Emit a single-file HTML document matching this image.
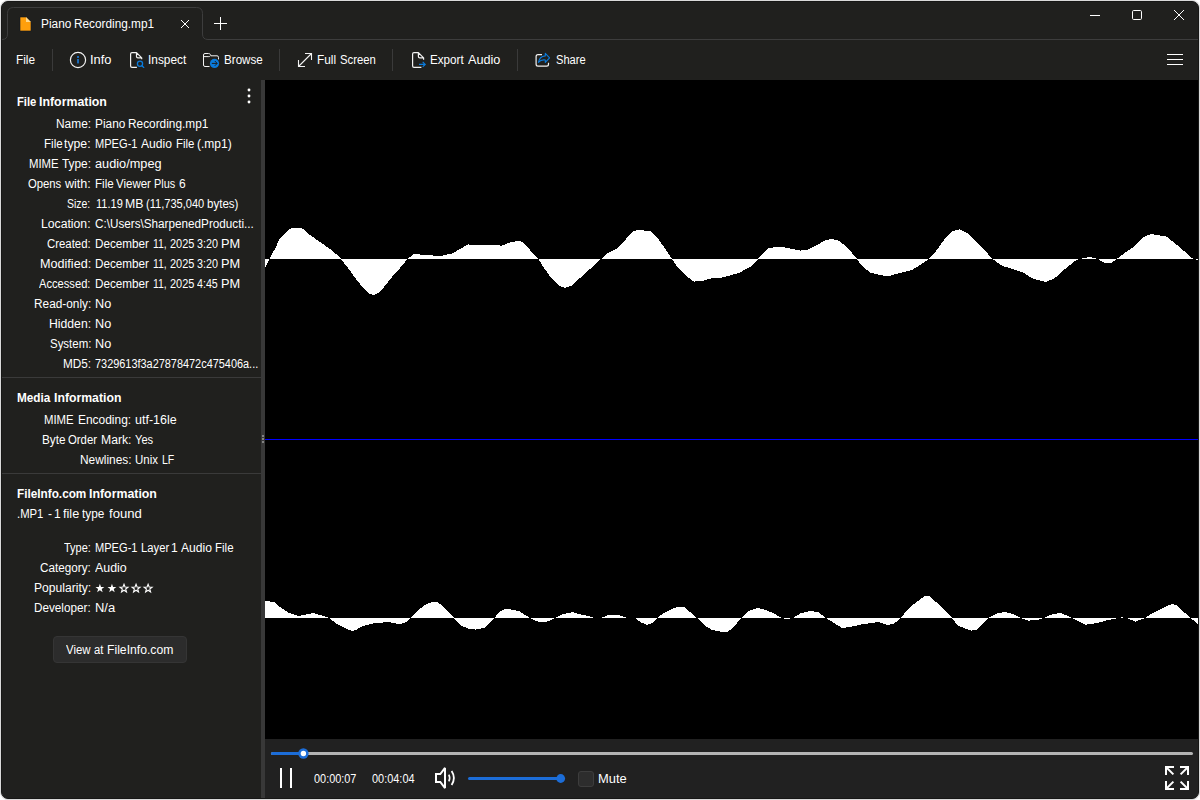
<!DOCTYPE html>
<html lang="en"><head><meta charset="utf-8"><title>Piano Recording.mp1 - File Viewer Plus</title>
<style>
html,body{margin:0;padding:0;width:1200px;height:800px;overflow:hidden;background:#fff}
body{font-family:"Liberation Sans",sans-serif;font-size:12px;color:#fff}
#win{position:absolute;left:1px;top:1px;width:1198px;height:798px;box-sizing:border-box;border:1px solid #171716;border-radius:7px;background:#20201e;overflow:hidden;box-shadow:0 0 0 1px #dadada}
#pg{position:absolute;left:-2px;top:-2px;width:1200px;height:800px}
#pg div,#pg span,#pg svg{position:absolute}
.t{white-space:nowrap;line-height:14px;height:14px;font-size:12px;transform-origin:0 0;color:#fff}
.b{font-weight:bold}
.vs{background:#3a3a3a;width:1px;height:22px;top:49px}
.hs{background:#3a3a3a;height:1px;left:2px;width:259px}
#canvas{left:265px;top:80px;width:934px;height:659px;background:#000}
#ctrl{left:265px;top:739px;width:934px;height:60px;background:#212121}
#split{left:261px;top:80px;width:4px;height:719px;background:#383838}
#btn{left:53px;top:636px;width:134px;height:27px;box-sizing:border-box;border:1px solid #353535;border-radius:4px;background:#2c2c2c}
#chk{left:578px;top:771px;width:16px;height:16px;box-sizing:border-box;border:1px solid #3d3d3d;border-radius:3px;background:#2d2d2d}
</style></head>
<body>
<div id="win"><div id="pg">
<div id="canvas"></div>
<div id="ctrl"></div>
<div id="split"></div>
<div class="vs" style="left:52px"></div>
<div class="vs" style="left:279px"></div>
<div class="vs" style="left:392px"></div>
<div class="vs" style="left:517px"></div>
<div class="hs" style="top:377px"></div>
<div class="hs" style="top:473px"></div>
<div id="btn"></div>
<div id="chk"></div>
<svg id="art" width="1200" height="800" viewBox="0 0 1200 800" style="left:0;top:0">
<!-- tab outline + title line -->
<path d="M2 39.5 Q7.5 39.5 7.5 34 V13.5 Q7.5 7.5 13.5 7.5 H196.5 Q202.5 7.5 202.5 13.5 V34 Q202.5 39.5 208 39.5 H1199" fill="none" stroke="#3d3d3d" stroke-width="1"/>
<!-- tab file icon -->
<path d="M20 17 H26 L31 22 V31 H20 Z" fill="#ff9f0c" stroke="#101822" stroke-width="0.6"/>
<path d="M26 17 V22 H31 Z" fill="#ffd88c"/>
<!-- tab close -->
<path d="M181 20 L189 28 M189 20 L181 28" stroke="#fff" stroke-width="1" fill="none"/>
<!-- plus -->
<path d="M220.5 17 V30 M214 23.5 H227" stroke="#fff" stroke-width="1" fill="none"/>
<!-- window controls -->
<path d="M1090 15.5 H1100" stroke="#fff" stroke-width="1"/>
<rect x="1132.5" y="10.5" width="9" height="9" rx="1.2" fill="none" stroke="#fff" stroke-width="1"/>
<path d="M1174 10 L1184 20 M1184 10 L1174 20" stroke="#fff" stroke-width="1" fill="none"/>
<!-- hamburger -->
<path d="M1167 54.5 H1183 M1167 59.5 H1183 M1167 64.5 H1183" stroke="#fff" stroke-width="1"/>
<!-- info icon -->
<circle cx="78" cy="60" r="7.6" fill="none" stroke="#f2f2f2" stroke-width="1.2"/>
<rect x="77" y="56" width="2" height="2" fill="#1a6ab8"/>
<rect x="77" y="59" width="2" height="4.4" fill="#1a6ab8"/>
<!-- inspect icon -->
<path d="M136.9 67.4 H132 Q130.6 67.4 130.6 66 V54 Q130.6 52.6 132 52.6 H136.5 L141.7 57.8 V59.2 M136.5 52.8 V56.4 Q136.5 57.8 137.9 57.8 H141.5" fill="none" stroke="#f2f2f2" stroke-width="1.2" stroke-linejoin="round"/>
<circle cx="140" cy="63.8" r="2.6" fill="none" stroke="#0a7bdc" stroke-width="1.3"/>
<path d="M141.9 65.7 L143.8 67.4" stroke="#0a7bdc" stroke-width="1.3" stroke-linecap="round"/>
<!-- browse icon -->
<path d="M209.5 66.5 H205 Q203.5 66.5 203.5 65 V55 Q203.5 53.5 205 53.5 H208.6 Q209.6 53.5 210.2 54.3 L211 55.8 H217 Q218.5 55.8 218.5 57.3 V59.4 M203.5 56.6 H208.8 Q209.8 56.6 210.4 55.9" fill="none" stroke="#f2f2f2" stroke-width="1" stroke-linejoin="round"/>
<circle cx="214.5" cy="63.4" r="4.6" fill="#0a7bdc"/>
<path d="M211.8 63.4 H217 M214.8 61 L217.2 63.4 L214.8 65.8" fill="none" stroke="#1e1e1e" stroke-width="1"/>
<!-- full screen icon -->
<path d="M298.5 66.5 L311.5 53.5 M305 53.5 H311.5 V60 M298.5 60 V66.5 H305" fill="none" stroke="#f2f2f2" stroke-width="1.1"/>
<!-- export icon -->
<path d="M421.4 67.4 H414 Q412.6 67.4 412.6 66 V54 Q412.6 52.6 414 52.6 H418.4 L423.6 57.8 V59.8 M418.4 52.8 V56.4 Q418.4 57.8 419.8 57.8 H423.4" fill="none" stroke="#f2f2f2" stroke-width="1.2" stroke-linejoin="round"/>
<path d="M419 64.4 H425 M422.7 61.9 L425.2 64.4 L422.7 66.9" fill="none" stroke="#0a7bdc" stroke-width="1.2"/>
<!-- share icon -->
<path d="M542 54.7 H538 Q536.1 54.7 536.1 56.6 V64.2 Q536.1 66.1 538 66.1 H546.6 Q548.5 66.1 548.5 64.2 V62.8" fill="none" stroke="#f2f2f2" stroke-width="1.2"/>
<path d="M545.3 53.4 L549.6 57.9 L545.3 62.4 V60 Q541 59.4 538.4 62.4 Q539.4 56.6 545.3 55.9 Z" fill="none" stroke="#0a7bdc" stroke-width="1.1" stroke-linejoin="round"/>
<!-- panel kebab -->
<circle cx="249" cy="90" r="1.45" fill="#fff"/><circle cx="249" cy="96" r="1.45" fill="#fff"/><circle cx="249" cy="102" r="1.45" fill="#fff"/>
<!-- splitter grip -->
<rect x="262" y="435" width="2" height="2" fill="#828282"/><rect x="262" y="438" width="2" height="2" fill="#828282"/><rect x="262" y="441" width="2" height="2" fill="#828282"/>
<!-- waveform -->
<g shape-rendering="crispEdges">
<polygon points="265.0,259 265.0,268.3 269.6,259.0 272.0,253.5 275.5,248.0 278.6,240.5 284.2,234.0 288.6,230.0 292.0,228.0 301.8,228.0 306.0,231.5 310.0,235.0 320.0,242.0 330.0,249.0 336.0,254.0 341.0,259.0 348.0,268.0 356.0,279.0 364.0,289.0 370.0,294.0 374.0,295.0 378.0,293.0 384.0,287.0 392.0,277.0 400.0,268.0 407.5,259.0 414.0,254.0 426.0,255.0 440.0,256.0 452.0,253.6 460.0,249.0 468.0,244.4 474.0,245.0 490.0,245.0 502.0,245.6 510.0,242.4 518.0,241.0 522.0,241.6 530.0,250.0 538.5,259.0 544.0,268.0 552.0,279.0 560.0,286.0 565.0,288.0 572.0,285.6 580.0,278.0 590.0,269.0 601.0,259.0 608.0,253.0 616.0,249.0 626.0,239.0 633.0,231.6 638.0,230.0 650.0,231.0 656.0,236.0 664.0,247.0 672.0,259.0 678.0,268.0 686.0,276.0 694.0,281.6 702.0,281.0 710.0,278.6 722.0,277.6 730.0,275.6 740.0,272.4 750.0,267.0 758.0,259.0 764.0,252.0 769.0,248.0 780.0,246.6 790.0,248.4 800.0,250.6 808.0,249.6 818.0,244.4 826.0,240.0 832.0,239.0 838.0,240.4 846.0,246.0 852.0,253.0 857.0,259.0 862.0,266.0 870.0,272.4 880.0,275.0 888.0,276.6 896.0,274.0 912.0,270.0 920.0,265.0 929.0,259.0 936.0,251.0 944.0,240.0 952.0,231.6 959.5,229.2 968.8,234.0 981.0,246.5 992.7,259.0 1002.0,265.8 1012.5,268.8 1023.0,272.5 1033.0,278.8 1045.8,281.9 1054.0,278.8 1064.6,269.4 1075.0,261.0 1079.0,259.0 1089.6,256.9 1098.0,259.0 1102.5,262.0 1105.5,263.0 1111.0,263.0 1116.7,259.0 1125.0,252.7 1133.0,247.5 1143.8,237.0 1151.0,234.0 1166.7,236.7 1179.0,246.5 1191.7,258.0 1199.0,260.5 1199.0,259" fill="#fff"/>
<polygon points="265.0,618 265.0,601.0 274.0,602.0 280.0,607.0 288.0,612.4 298.0,616.0 304.0,615.0 313.0,613.0 320.0,615.0 329.6,618.0 336.0,623.6 344.0,627.6 352.0,631.0 356.0,630.0 362.0,626.4 372.0,623.6 388.0,622.0 400.0,624.4 406.0,622.0 411.0,618.0 418.0,610.0 426.0,604.4 432.0,602.0 438.0,602.4 446.0,609.0 454.0,618.0 460.0,625.0 468.0,628.6 476.0,629.6 484.0,628.0 490.0,623.0 494.5,618.0 499.0,612.0 505.0,609.0 512.0,609.6 520.0,611.6 526.0,615.6 530.0,618.0 536.0,621.0 542.0,622.6 549.0,621.0 555.0,618.0 562.0,614.4 573.0,612.0 580.0,614.4 590.0,616.4 594.0,618.0 601.0,618.0 608.0,615.2 620.0,615.4 628.0,618.0 635.0,618.0 641.0,622.4 647.0,625.0 652.0,623.0 657.0,618.0 664.0,613.0 672.0,609.0 678.0,606.6 684.0,607.0 690.0,612.0 697.0,618.0 704.0,625.0 712.0,630.0 722.0,632.0 728.0,631.6 734.0,627.0 741.0,618.0 748.0,611.0 758.0,608.0 766.0,610.0 775.0,614.0 781.0,617.6 786.0,619.4 793.0,618.0 800.0,613.6 810.0,611.0 818.0,612.0 826.0,618.0 834.0,623.0 842.0,628.0 850.0,627.0 862.0,624.4 878.0,622.0 888.0,625.0 894.0,623.6 901.0,618.0 908.0,609.0 916.0,602.4 924.0,596.4 930.0,596.4 936.0,602.0 944.0,610.0 952.0,618.0 958.0,625.8 971.0,630.6 977.0,629.6 983.0,623.8 988.5,618.0 996.0,613.8 1005.0,612.0 1012.5,613.8 1021.0,618.0 1028.0,620.6 1037.5,620.2 1043.8,618.0 1052.0,614.4 1060.4,613.0 1066.7,615.4 1072.0,618.0 1079.0,621.7 1085.4,624.8 1095.8,623.3 1106.0,620.6 1116.7,618.3 1122.0,617.4 1127.0,618.0 1135.4,621.7 1144.8,618.0 1152.0,613.3 1162.5,608.0 1171.9,604.0 1177.0,605.4 1183.0,611.2 1190.6,618.0 1199.0,624.8 1199.0,618" fill="#fff"/>
<rect x="265" y="439" width="934" height="1" fill="#0000ff"/>
</g>
<!-- stars -->
<g id="stars">
<polygon points="99.90,583.80 101.02,586.91 104.32,587.01 101.71,589.04 102.63,592.21 99.90,590.35 97.17,592.21 98.09,589.04 95.48,587.01 98.78,586.91" fill="#fff"/>
<polygon points="111.95,583.80 113.07,586.91 116.37,587.01 113.76,589.04 114.68,592.21 111.95,590.35 109.22,592.21 110.14,589.04 107.53,587.01 110.83,586.91" fill="#fff"/>
<polygon points="124.00,584.25 125.03,587.03 127.99,587.15 125.66,588.99 126.47,591.85 124.00,590.20 121.53,591.85 122.34,588.99 120.01,587.15 122.97,587.03" fill="none" stroke="#fff" stroke-width="1.1" stroke-linejoin="miter"/>
<polygon points="136.05,584.25 137.08,587.03 140.04,587.15 137.71,588.99 138.52,591.85 136.05,590.20 133.58,591.85 134.39,588.99 132.06,587.15 135.02,587.03" fill="none" stroke="#fff" stroke-width="1.1" stroke-linejoin="miter"/>
<polygon points="148.10,584.25 149.13,587.03 152.09,587.15 149.76,588.99 150.57,591.85 148.10,590.20 145.63,591.85 146.44,588.99 144.11,587.15 147.07,587.03" fill="none" stroke="#fff" stroke-width="1.1" stroke-linejoin="miter"/>
</g>
<!-- progress -->
<rect x="271" y="752" width="922" height="3" rx="1.5" fill="#b4b4b4"/>
<rect x="271" y="752" width="33" height="3" rx="1.5" fill="#1c6dd8"/>
<circle cx="303.4" cy="753.5" r="5.2" fill="#1c6dd8"/>
<circle cx="303.4" cy="753.5" r="2.7" fill="#fff"/>
<!-- pause -->
<rect x="280" y="768" width="2" height="20" fill="#fff"/><rect x="290" y="768" width="2" height="20" fill="#fff"/>
<!-- speaker -->
<path d="M436 774 H440.3 L445 767.9 V788.1 L440.3 782 H436 Z" fill="none" stroke="#fff" stroke-width="2" stroke-linejoin="miter" stroke-miterlimit="1.6"/>
<path d="M448.8 774.6 Q450.6 778 448.8 781.4" fill="none" stroke="#fff" stroke-width="1.6"/>
<path d="M451.6 771 Q456.2 778 451.6 785" fill="none" stroke="#fff" stroke-width="1.8"/>
<!-- volume -->
<rect x="468" y="777" width="93" height="3" rx="1.5" fill="#1c6dd8"/>
<circle cx="560.7" cy="778.5" r="4.4" fill="#1c6dd8"/>
<!-- full screen btn -->
<g fill="none" stroke="#fff" stroke-width="2">
<path d="M1174 767 H1166 V775 M1166.5 767.5 L1173.4 774.4"/>
<path d="M1180 767 H1188 V775 M1187.5 767.5 L1180.6 774.4"/>
<path d="M1174 789 H1166 V781 M1166.5 788.5 L1173.4 781.6"/>
<path d="M1180 789 H1188 V781 M1187.5 788.5 L1180.6 781.6"/>
</g>
</svg>
<span class="t" style="left:41.00px;top:17px;transform:scaleX(0.9886)">Piano</span>
<span class="t" style="left:74.00px;top:17px;transform:scaleX(0.9835)">Recording.mp1</span>
<span class="t" style="left:16.00px;top:53px;transform:scaleX(0.9864)">File</span>
<span class="t" style="left:90.00px;top:53px;transform:scaleX(1.0727)">Info</span>
<span class="t" style="left:148.00px;top:53px;transform:scaleX(0.9901)">Inspect</span>
<span class="t" style="left:224.00px;top:53px;transform:scaleX(0.9688)">Browse</span>
<span class="t" style="left:317.00px;top:53px;transform:scaleX(0.9863)">Full</span>
<span class="t" style="left:340.00px;top:53px;transform:scaleX(0.9434)">Screen</span>
<span class="t" style="left:430.00px;top:53px;transform:scaleX(0.9712)">Export</span>
<span class="t" style="left:468.00px;top:53px;transform:scaleX(1.0565)">Audio</span>
<span class="t" style="left:556.00px;top:53px;transform:scaleX(0.9282)">Share</span>
<span class="t b" style="left:17.00px;top:95px;transform:scaleX(0.9373)">File</span>
<span class="t b" style="left:39.00px;top:95px;transform:scaleX(1.0290)">Information</span>
<span class="t" style="left:56.00px;top:117px;transform:scaleX(0.9929)">Name:</span>
<span class="t" style="left:95.00px;top:117px;transform:scaleX(0.9886)">Piano</span>
<span class="t" style="left:128.00px;top:117px;transform:scaleX(0.9872)">Recording.mp1</span>
<span class="t" style="left:44.00px;top:137px;transform:scaleX(0.9662)">File</span>
<span class="t" style="left:64.00px;top:137px;transform:scaleX(1.0196)">type:</span>
<span class="t" style="left:95.00px;top:137px;transform:scaleX(0.9233)">MPEG-1</span>
<span class="t" style="left:141.00px;top:137px;transform:scaleX(1.0102)">Audio</span>
<span class="t" style="left:176.00px;top:137px;transform:scaleX(0.9535)">File</span>
<span class="t" style="left:197.00px;top:137px;transform:scaleX(1.0003)">(.mp1)</span>
<span class="t" style="left:29.00px;top:157px;transform:scaleX(0.9464)">MIME</span>
<span class="t" style="left:62.00px;top:157px;transform:scaleX(0.9873)">Type:</span>
<span class="t" style="left:95.00px;top:157px;transform:scaleX(1.0615)">audio/mpeg</span>
<span class="t" style="left:28.00px;top:177px;transform:scaleX(0.9410)">Opens</span>
<span class="t" style="left:65.00px;top:177px;transform:scaleX(1.0476)">with:</span>
<span class="t" style="left:95.00px;top:177px;transform:scaleX(0.9662)">File</span>
<span class="t" style="left:116.00px;top:177px;transform:scaleX(0.9585)">Viewer</span>
<span class="t" style="left:154.00px;top:177px;transform:scaleX(0.9095)">Plus</span>
<span class="t" style="left:179.00px;top:177px;transform:scaleX(1.0000)">6</span>
<span class="t" style="left:67.00px;top:197px;transform:scaleX(0.8723)">Size:</span>
<span class="t" style="left:96.00px;top:197px;transform:scaleX(0.9182)">11.19</span>
<span class="t" style="left:125.00px;top:197px;transform:scaleX(1.0265)">MB</span>
<span class="t" style="left:146.00px;top:197px;transform:scaleX(0.9218)">(11,735,040</span>
<span class="t" style="left:207.00px;top:197px;transform:scaleX(0.9614)">bytes)</span>
<span class="t" style="left:41.00px;top:217px;transform:scaleX(1.0173)">Location:</span>
<span class="t" style="left:95.00px;top:217px;transform:scaleX(0.9757)">C:\Users\SharpenedProducti...</span>
<span class="t" style="left:47.00px;top:237px;transform:scaleX(0.9494)">Created:</span>
<span class="t" style="left:95.00px;top:237px;transform:scaleX(0.9752)">December</span>
<span class="t" style="left:153.00px;top:237px;transform:scaleX(0.8714)">11,</span>
<span class="t" style="left:170.00px;top:237px;transform:scaleX(0.9155)">2025</span>
<span class="t" style="left:197.00px;top:237px;transform:scaleX(0.8963)">3:20</span>
<span class="t" style="left:221.00px;top:237px;transform:scaleX(1.0656)">PM</span>
<span class="t" style="left:40.00px;top:257px;transform:scaleX(1.0510)">Modified:</span>
<span class="t" style="left:95.00px;top:257px;transform:scaleX(0.9752)">December</span>
<span class="t" style="left:153.00px;top:257px;transform:scaleX(0.8714)">11,</span>
<span class="t" style="left:170.00px;top:257px;transform:scaleX(0.9155)">2025</span>
<span class="t" style="left:197.00px;top:257px;transform:scaleX(0.8963)">3:20</span>
<span class="t" style="left:221.00px;top:257px;transform:scaleX(1.0656)">PM</span>
<span class="t" style="left:39.00px;top:277px;transform:scaleX(0.9290)">Accessed:</span>
<span class="t" style="left:95.00px;top:277px;transform:scaleX(0.9752)">December</span>
<span class="t" style="left:153.00px;top:277px;transform:scaleX(0.8714)">11,</span>
<span class="t" style="left:170.00px;top:277px;transform:scaleX(0.9155)">2025</span>
<span class="t" style="left:197.00px;top:277px;transform:scaleX(0.8911)">4:45</span>
<span class="t" style="left:221.00px;top:277px;transform:scaleX(1.0656)">PM</span>
<span class="t" style="left:34.00px;top:297px;transform:scaleX(0.9861)">Read-only:</span>
<span class="t" style="left:95.00px;top:297px;transform:scaleX(1.0573)">No</span>
<span class="t" style="left:49.00px;top:317px;transform:scaleX(1.0175)">Hidden:</span>
<span class="t" style="left:95.00px;top:317px;transform:scaleX(1.0573)">No</span>
<span class="t" style="left:50.00px;top:337px;transform:scaleX(0.9549)">System:</span>
<span class="t" style="left:95.00px;top:337px;transform:scaleX(1.0573)">No</span>
<span class="t" style="left:63.00px;top:357px;transform:scaleX(0.9799)">MD5:</span>
<span class="t" style="left:95.00px;top:357px;transform:scaleX(0.9091)">7329613f3a27878472c475406a...</span>
<span class="t b" style="left:17.00px;top:391px;transform:scaleX(0.9819)">Media</span>
<span class="t b" style="left:54.00px;top:391px;transform:scaleX(1.0212)">Information</span>
<span class="t" style="left:44.00px;top:413px;transform:scaleX(0.9464)">MIME</span>
<span class="t" style="left:78.00px;top:413px;transform:scaleX(0.9954)">Encoding:</span>
<span class="t" style="left:135.00px;top:413px;transform:scaleX(1.0405)">utf-16le</span>
<span class="t" style="left:42.00px;top:433px;transform:scaleX(0.9821)">Byte</span>
<span class="t" style="left:68.00px;top:433px;transform:scaleX(0.9462)">Order</span>
<span class="t" style="left:101.00px;top:433px;transform:scaleX(1.0154)">Mark:</span>
<span class="t" style="left:135.00px;top:433px;transform:scaleX(0.9278)">Yes</span>
<span class="t" style="left:80.00px;top:453px;transform:scaleX(0.9910)">Newlines:</span>
<span class="t" style="left:135.00px;top:453px;transform:scaleX(0.9570)">Unix</span>
<span class="t" style="left:162.00px;top:453px;transform:scaleX(0.8788)">LF</span>
<span class="t b" style="left:17.00px;top:487px;transform:scaleX(0.9812)">FileInfo.com</span>
<span class="t b" style="left:89.00px;top:487px;transform:scaleX(1.0290)">Information</span>
<span class="t" style="left:17.00px;top:507px;transform:scaleX(0.9411)">.MP1</span>
<span class="t" style="left:48.00px;top:507px;transform:scaleX(1.0000)">-</span>
<span class="t" style="left:54.00px;top:507px;transform:scaleX(1.0000)">1</span>
<span class="t" style="left:63.00px;top:507px;transform:scaleX(1.0554)">file</span>
<span class="t" style="left:82.00px;top:507px;transform:scaleX(0.9845)">type</span>
<span class="t" style="left:109.00px;top:507px;transform:scaleX(1.0941)">found</span>
<span class="t" style="left:64.00px;top:541px;transform:scaleX(0.9129)">Type:</span>
<span class="t" style="left:95.00px;top:541px;transform:scaleX(0.9233)">MPEG-1</span>
<span class="t" style="left:141.00px;top:541px;transform:scaleX(0.9376)">Layer</span>
<span class="t" style="left:171.00px;top:541px;transform:scaleX(1.0000)">1</span>
<span class="t" style="left:181.00px;top:541px;transform:scaleX(1.0102)">Audio</span>
<span class="t" style="left:215.00px;top:541px;transform:scaleX(0.9578)">File</span>
<span class="t" style="left:40.00px;top:561px;transform:scaleX(0.9757)">Category:</span>
<span class="t" style="left:95.00px;top:561px;transform:scaleX(1.0342)">Audio</span>
<span class="t" style="left:34.00px;top:581px;transform:scaleX(1.0096)">Popularity:</span>
<span class="t" style="left:34.00px;top:601px;transform:scaleX(0.9759)">Developer:</span>
<span class="t" style="left:95.00px;top:601px;transform:scaleX(1.0810)">N/a</span>
<span class="t" style="left:66.00px;top:643px;transform:scaleX(0.9514)">View</span>
<span class="t" style="left:94.00px;top:643px;transform:scaleX(0.9335)">at</span>
<span class="t" style="left:107.00px;top:643px;transform:scaleX(1.0160)">FileInfo.com</span>
<span class="t" style="left:314.00px;top:772px;transform:scaleX(0.9084)">00:00:07</span>
<span class="t" style="left:372.00px;top:772px;transform:scaleX(0.9106)">00:04:04</span>
<span class="t" style="left:598.00px;top:772px;transform:scaleX(1.0766)">Mute</span>
</div></div>
</body></html>
